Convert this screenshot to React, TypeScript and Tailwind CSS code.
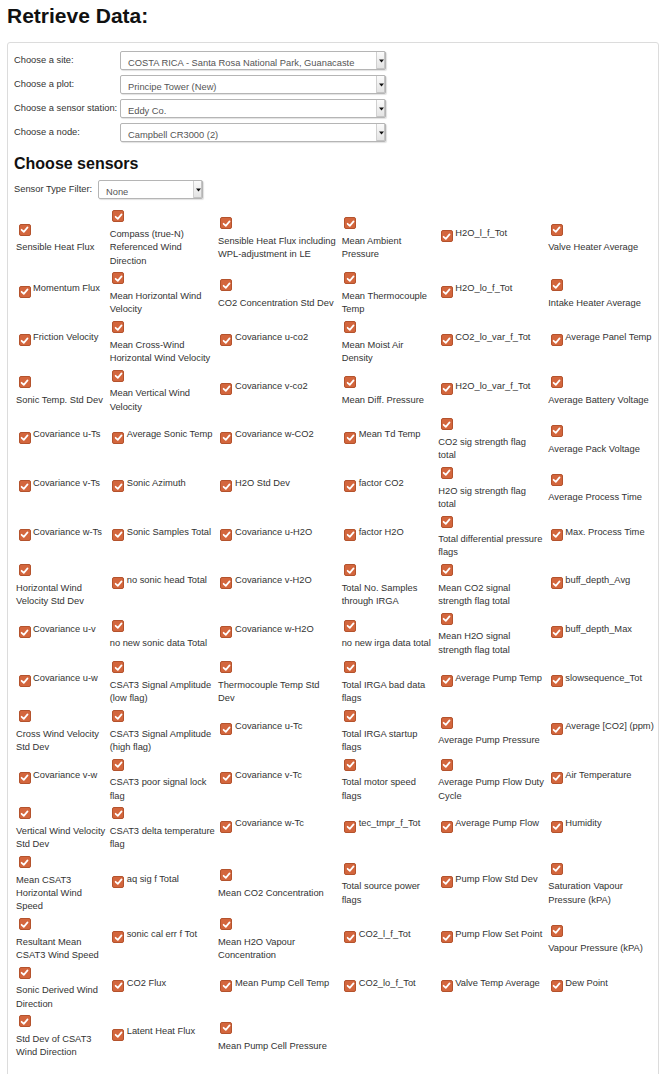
import React from 'react';

type Sensor = { t: string; i?: boolean };

// i = checkbox and label on one line
const sensors: Sensor[] = [
  { t: 'Sensible Heat Flux' },
  { t: 'Compass (true-N)\nReferenced Wind\nDirection' },
  { t: 'Sensible Heat Flux including\nWPL-adjustment in LE' },
  { t: 'Mean Ambient\nPressure' },
  { t: 'H2O_l_f_Tot', i: true },
  { t: 'Valve Heater Average' },

  { t: 'Momentum Flux', i: true },
  { t: 'Mean Horizontal Wind\nVelocity' },
  { t: 'CO2 Concentration Std Dev' },
  { t: 'Mean Thermocouple\nTemp' },
  { t: 'H2O_lo_f_Tot', i: true },
  { t: 'Intake Heater Average' },

  { t: 'Friction Velocity', i: true },
  { t: 'Mean Cross-Wind\nHorizontal Wind Velocity' },
  { t: 'Covariance u-co2', i: true },
  { t: 'Mean Moist Air\nDensity' },
  { t: 'CO2_lo_var_f_Tot', i: true },
  { t: 'Average Panel Temp', i: true },

  { t: 'Sonic Temp. Std Dev' },
  { t: 'Mean Vertical Wind\nVelocity' },
  { t: 'Covariance v-co2', i: true },
  { t: 'Mean Diff. Pressure' },
  { t: 'H2O_lo_var_f_Tot', i: true },
  { t: 'Average Battery Voltage' },

  { t: 'Covariance u-Ts', i: true },
  { t: 'Average Sonic Temp', i: true },
  { t: 'Covariance w-CO2', i: true },
  { t: 'Mean Td Temp', i: true },
  { t: 'CO2 sig strength flag\ntotal' },
  { t: 'Average Pack Voltage' },

  { t: 'Covariance v-Ts', i: true },
  { t: 'Sonic Azimuth', i: true },
  { t: 'H2O Std Dev', i: true },
  { t: 'factor CO2', i: true },
  { t: 'H2O sig strength flag\ntotal' },
  { t: 'Average Process Time' },

  { t: 'Covariance w-Ts', i: true },
  { t: 'Sonic Samples Total', i: true },
  { t: 'Covariance u-H2O', i: true },
  { t: 'factor H2O', i: true },
  { t: 'Total differential pressure\nflags' },
  { t: 'Max. Process Time', i: true },

  { t: 'Horizontal Wind\nVelocity Std Dev' },
  { t: 'no sonic head Total', i: true },
  { t: 'Covariance v-H2O', i: true },
  { t: 'Total No. Samples\nthrough IRGA' },
  { t: 'Mean CO2 signal\nstrength flag total' },
  { t: 'buff_depth_Avg', i: true },

  { t: 'Covariance u-v', i: true },
  { t: 'no new sonic data Total' },
  { t: 'Covariance w-H2O', i: true },
  { t: 'no new irga data total' },
  { t: 'Mean H2O signal\nstrength flag total' },
  { t: 'buff_depth_Max', i: true },

  { t: 'Covariance u-w', i: true },
  { t: 'CSAT3 Signal Amplitude\n(low flag)' },
  { t: 'Thermocouple Temp Std\nDev' },
  { t: 'Total IRGA bad data\nflags' },
  { t: 'Average Pump Temp', i: true },
  { t: 'slowsequence_Tot', i: true },

  { t: 'Cross Wind Velocity\nStd Dev' },
  { t: 'CSAT3 Signal Amplitude\n(high flag)' },
  { t: 'Covariance u-Tc', i: true },
  { t: 'Total IRGA startup\nflags' },
  { t: 'Average Pump Pressure' },
  { t: 'Average [CO2] (ppm)', i: true },

  { t: 'Covariance v-w', i: true },
  { t: 'CSAT3 poor signal lock\nflag' },
  { t: 'Covariance v-Tc', i: true },
  { t: 'Total motor speed\nflags' },
  { t: 'Average Pump Flow Duty\nCycle' },
  { t: 'Air Temperature', i: true },

  { t: 'Vertical Wind Velocity\nStd Dev' },
  { t: 'CSAT3 delta temperature\nflag' },
  { t: 'Covariance w-Tc', i: true },
  { t: 'tec_tmpr_f_Tot', i: true },
  { t: 'Average Pump Flow', i: true },
  { t: 'Humidity', i: true },

  { t: 'Mean CSAT3\nHorizontal Wind\nSpeed' },
  { t: 'aq sig f Total', i: true },
  { t: 'Mean CO2 Concentration' },
  { t: 'Total source power\nflags' },
  { t: 'Pump Flow Std Dev', i: true },
  { t: 'Saturation Vapour\nPressure (kPA)' },

  { t: 'Resultant Mean\nCSAT3 Wind Speed' },
  { t: 'sonic cal err f Tot', i: true },
  { t: 'Mean H2O Vapour\nConcentration' },
  { t: 'CO2_l_f_Tot', i: true },
  { t: 'Pump Flow Set Point', i: true },
  { t: 'Vapour Pressure (kPA)' },

  { t: 'Sonic Derived Wind\nDirection' },
  { t: 'CO2 Flux', i: true },
  { t: 'Mean Pump Cell Temp', i: true },
  { t: 'CO2_lo_f_Tot', i: true },
  { t: 'Valve Temp Average', i: true },
  { t: 'Dew Point', i: true },

  { t: 'Std Dev of CSAT3\nWind Direction' },
  { t: 'Latent Heat Flux', i: true },
  { t: 'Mean Pump Cell Pressure' },
];

function Check() {
  return (
    <span className="flex h-[12px] w-[12px] shrink-0 items-center justify-center rounded-[2px] border border-[#b4532d] bg-[#d3663d]">
      <svg width="9" height="9" viewBox="0 0 10 10">
        <path d="M1.8 5.3 4.2 7.6 8.4 2.6" fill="none" stroke="#fff" strokeWidth="1.9" strokeLinecap="round" strokeLinejoin="round" />
      </svg>
    </span>
  );
}

function Select({ value, w }: { value: string; w: string }) {
  return (
    <div className={`flex h-[19px] ${w} items-stretch rounded-[2px] border border-[#b5b5b5] bg-white shadow-[1px_1px_1px_rgba(0,0,0,0.12)]`}>
      <span className="mt-[4px] flex-1 truncate pl-[7px] leading-[15px] text-[#555]">{value}</span>
      <span className="flex w-[9px] items-center justify-center border-l border-[#d0d0d0] bg-gradient-to-b from-[#fbfbfb] to-[#e2e2e2] shadow-[inset_-1px_-1px_0_#c4c4c4]">
        <svg width="5" height="4" viewBox="0 0 5 4">
          <path d="M0 0.5h5L2.5 3.5z" fill="#111" />
        </svg>
      </span>
    </div>
  );
}

const fields = [
  { label: 'Choose a site:', value: 'COSTA RICA - Santa Rosa National Park, Guanacaste' },
  { label: 'Choose a plot:', value: 'Principe Tower (New)' },
  { label: 'Choose a sensor station:', value: 'Eddy Co.' },
  { label: 'Choose a node:', value: 'Campbell CR3000 (2)' },
];

export default function App() {
  return (
    <div className="min-h-screen bg-white px-[7px] font-['Liberation_Sans',Arial,sans-serif] text-[9.33px] leading-[13.33px] text-[#333]">
      <h1 className="pt-[4px] text-[21px] font-bold leading-[24px] text-[#111]">Retrieve Data:</h1>

      <div className="mt-[14px] rounded-[3px] border border-[#dcdcdc] px-[6px] pb-[24px] pt-[8px]">
        {/* selectors */}
        <div className="flex flex-col gap-[5px]">
          {fields.map(f => (
            <div key={f.label} className="flex items-center">
              <span className="w-[106px] shrink-0">{f.label}</span>
              <Select value={f.value} w="w-[266px]" />
            </div>
          ))}
        </div>

        <h3 className="mt-[13px] text-[16px] font-bold leading-[18px] text-[#111]">Choose sensors</h3>

        <div className="mt-[7px] flex items-center">
          <span className="w-[84px] shrink-0">Sensor Type Filter:</span>
          <Select value="None" w="w-[105px]" />
        </div>

        {/* sensor grid */}
        <div className="ml-[2px] mt-[9px] grid grid-cols-[93.7px_108.3px_123.7px_96.6px_110px_1fr] items-center">
          {sensors.map(s =>
            s.i ? (
              <div key={s.t} className="flex items-start pb-[8.6px]">
                <span className="ml-[2.5px] mt-[3.2px]"><Check /></span>
                <span className="ml-[2.5px] whitespace-pre">{s.t}</span>
              </div>
            ) : (
              <div key={s.t} className="pb-[2px] pt-[2.4px]">
                <span className="ml-[2.5px] block w-fit"><Check /></span>
                <div className="mt-[5.6px] whitespace-pre">{s.t}</div>
              </div>
            )
          )}
        </div>
      </div>
    </div>
  );
}
